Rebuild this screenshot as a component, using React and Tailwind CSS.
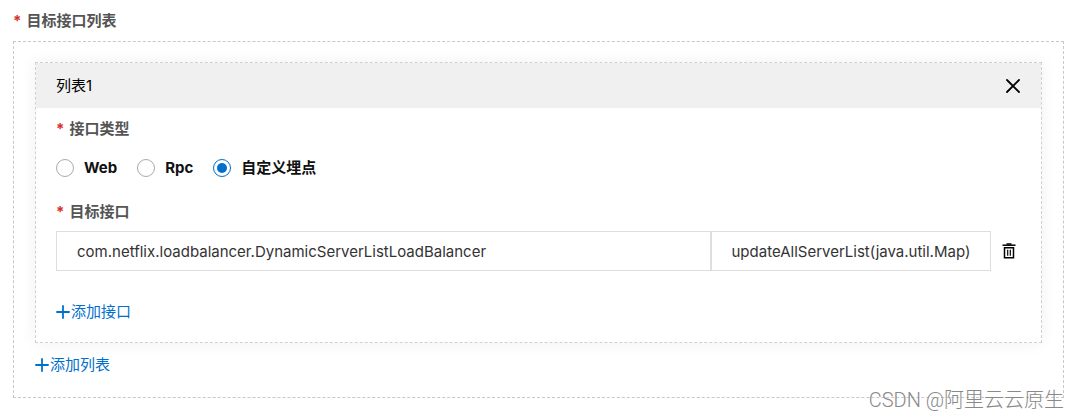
import { useState } from "react";

function Required({ children }) {
  return (
    <>
      <span aria-hidden="true" className="mr-[5px] font-bold text-[#d93026]">*</span>
      {children}
    </>
  );
}

function Plus() {
  return (
    <svg viewBox="0 0 14 14" className="size-3.5 shrink-0" fill="none" stroke="currentColor" strokeWidth="1.8" aria-hidden="true">
      <path d="M7 0.3V13.7M0.3 7H13.7" />
    </svg>
  );
}

function AddButton({ children }) {
  return (
    <button type="button" className="flex h-6 items-center gap-px text-[15px] leading-6 text-[#0070cc]">
      <Plus />
      {children}
    </button>
  );
}

const types = ["Web", "Rpc", "自定义埋点"];

export default function App() {
  const [type, setType] = useState("自定义埋点");
  return (
    <main className="relative bg-white pt-[9px] pr-4 pb-5 pl-[13px] font-['Inter','Noto_Sans_CJK_SC',sans-serif] text-[15px] leading-6 text-black">
      <h1 className="font-semibold text-[#555]">
        <Required>目标接口列表</Required>
      </h1>

      <section className="mt-2 border border-dashed border-[#c8c8c8] px-[21px] py-5">
        <div className="border border-dashed border-[#d0d0d0] shadow-[0_0_16px_rgba(0,0,0,0.06)]">
          <header className="flex h-[45px] items-center justify-between bg-[#f0f0f0] px-5">
            <h2>列表1</h2>
            <button type="button" aria-label="关闭" className="flex size-4 items-center justify-center">
              <svg viewBox="0 0 16 16" className="size-4" fill="none" stroke="currentColor" strokeWidth="1.8" strokeLinecap="round">
                <path d="M2 2L14 14M14 2L2 14" />
              </svg>
            </button>
          </header>

          <div className="px-5 pt-[9px] pb-[18px]">
            <fieldset>
              <legend className="font-semibold text-[#555]">
                <Required>接口类型</Required>
              </legend>
              <div className="mt-[15px] flex items-center gap-5">
                {types.map((name) => (
                  <label key={name} className="flex items-center gap-2.5 font-bold text-[#111]">
                    <input
                      type="radio"
                      name="type"
                      value={name}
                      checked={type === name}
                      onChange={() => setType(name)}
                      className="size-[18px] appearance-none rounded-full border border-[#aaa] bg-white bg-clip-content p-[3px] checked:border-[#0070cc] checked:bg-[#0070cc]"
                    />
                    {name}
                  </label>
                ))}
              </div>
            </fieldset>

            <label htmlFor="target-class" className="mt-5 block font-semibold text-[#555]">
              <Required>目标接口</Required>
            </label>
            <div className="mt-[7px] flex items-center">
              <div className="grid grow grid-cols-[7fr_3fr]">
                <input
                  id="target-class"
                  type="text"
                  defaultValue="com.netflix.loadbalancer.DynamicServerListLoadBalancer"
                  className="h-10 min-w-0 border border-[#dedede] px-5 text-[#333]"
                />
                <input
                  type="text"
                  aria-label="目标方法"
                  defaultValue="updateAllServerList(java.util.Map)"
                  className="h-10 min-w-0 border border-[#dedede] px-5 text-[#333]"
                />
              </div>
              <button type="button" aria-label="删除" className="mr-1 ml-2.5 flex size-4 items-center justify-center">
                <svg viewBox="0 0 16 16" className="size-4" fill="none" stroke="currentColor" aria-hidden="true">
                  <path d="M1.5 2.2H14.5" strokeWidth="1.5" />
                  <path d="M5.5 1H10.5" strokeWidth="1.5" />
                  <path d="M3.5 4.8H12.5V14.8H3.5Z" strokeWidth="1.5" />
                  <path d="M6.7 6.8V12.8M9.3 6.8V12.8" strokeWidth="1.2" />
                </svg>
              </button>
            </div>

            <div className="mt-[29px]">
              <AddButton>添加接口</AddButton>
            </div>
          </div>
        </div>

        <div className="mt-2.5">
          <AddButton>添加列表</AddButton>
        </div>
      </section>

      <p className="absolute right-4 bottom-1 font-['Roboto','Noto_Sans_CJK_SC',sans-serif] text-xl leading-7 font-light text-[#888]">
        CSDN @阿里云云原生
      </p>
    </main>
  );
}
